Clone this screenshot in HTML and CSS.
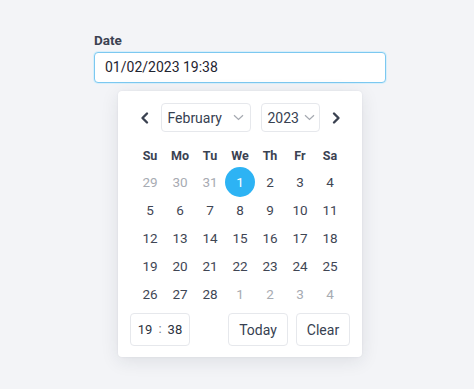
FILE: index.html
```html
<!DOCTYPE html>
<html>
<head>
<meta charset="utf-8">
<link rel="stylesheet" href="styles.css">
</head>
<body>
<div class="page">
  <label class="label">Date</label>
  <div class="input">01/02/2023 19:38</div>
  <div class="popup">
    <div class="header">
      <span class="nav"><svg width="16" height="16" viewBox="0 0 16 16"><polyline points="10,3.5 5.5,8 10,12.5" fill="none" stroke="#3a4150" stroke-width="2.4" stroke-linecap="round" stroke-linejoin="round"/></svg></span>
      <div class="select month">February<svg class="chev" width="11" height="7" viewBox="0 0 11 7"><polyline points="1,1.2 5.5,5.5 10,1.2" fill="none" stroke="#a5a9b0" stroke-width="1.2"/></svg></div>
      <div class="select year">2023<svg class="chev" width="11" height="7" viewBox="0 0 11 7"><polyline points="1,1.2 5.5,5.5 10,1.2" fill="none" stroke="#a5a9b0" stroke-width="1.2"/></svg></div>
      <span class="nav"><svg width="16" height="16" viewBox="0 0 16 16"><polyline points="6,3.5 10.5,8 6,12.5" fill="none" stroke="#3a4150" stroke-width="2.4" stroke-linecap="round" stroke-linejoin="round"/></svg></span>
    </div>
    <div class="grid">
      <div class="wd">Su</div><div class="wd">Mo</div><div class="wd">Tu</div><div class="wd">We</div><div class="wd">Th</div><div class="wd">Fr</div><div class="wd">Sa</div>
      <div class="day muted">29</div><div class="day muted">30</div><div class="day muted">31</div><div class="day"><span class="sel">1</span></div><div class="day">2</div><div class="day">3</div><div class="day">4</div>
      <div class="day">5</div><div class="day">6</div><div class="day">7</div><div class="day">8</div><div class="day">9</div><div class="day">10</div><div class="day">11</div>
      <div class="day">12</div><div class="day">13</div><div class="day">14</div><div class="day">15</div><div class="day">16</div><div class="day">17</div><div class="day">18</div>
      <div class="day">19</div><div class="day">20</div><div class="day">21</div><div class="day">22</div><div class="day">23</div><div class="day">24</div><div class="day">25</div>
      <div class="day">26</div><div class="day">27</div><div class="day">28</div><div class="day muted">1</div><div class="day muted">2</div><div class="day muted">3</div><div class="day muted">4</div>
    </div>
    <div class="footer">
      <div class="time"><span>19</span><span class="colon">:</span><span>38</span></div>
      <div class="spacer"></div>
      <div class="btn today">Today</div>
      <div class="btn clear">Clear</div>
    </div>
  </div>
</div>
</body>
</html>
```
FILE: styles.css
```css
html, body {
  margin: 0;
  padding: 0;
}
body {
  background: #f3f4f7;
  font-family: Roboto, "Liberation Sans", sans-serif;
  color: #374151;
  width: 474px;
  height: 389px;
  overflow: hidden;
}
.page {
  padding: 32px 0 0 94px;
}
.label {
  display: block;
  font-size: 13.5px;
  font-weight: 700;
  color: #3b4252;
  line-height: 16px;
  height: 20px;
}
.input {
  box-sizing: border-box;
  width: 292px;
  height: 31px;
  border: 1.5px solid #7cc8f0;
  border-radius: 4px;
  background: #fff;
  box-shadow: 0 0 0 1px #d8effb;
  font-size: 14px;
  line-height: 28px;
  padding-left: 10px;
  color: #1f2430;
}
.popup {
  box-sizing: border-box;
  margin: 8px 0 0 24px;
  width: 244px;
  height: 266px;
  background: #fff;
  border-radius: 4px;
  box-shadow: 0 4px 18px rgba(30, 40, 60, 0.10), 0 0 2px rgba(30, 40, 60, 0.08);
  padding: 12px 0 0;
}
.header {
  display: flex;
  align-items: center;
  justify-content: center;
  height: 29px;
}
.nav {
  display: flex;
  width: 16px;
  height: 16px;
}
.nav:first-child { margin-right: 8px; }
.nav:last-child { margin-left: 8px; }
.select {
  box-sizing: border-box;
  height: 29px;
  border: 1px solid #e6e8ec;
  border-radius: 4px;
  display: flex;
  align-items: center;
  justify-content: space-between;
  font-size: 14px;
  color: #374151;
  padding: 0 6px 0 6px;
}
.month { width: 90px; margin-right: 10px; }
.year { width: 59px; padding-right: 4px; }
.chev { display: block; }
.grid {
  display: grid;
  grid-template-columns: repeat(7, 30px);
  grid-template-rows: 26px repeat(5, 28px);
  margin: 10px 0 0 17px;
}
.wd {
  display: flex;
  align-items: center;
  justify-content: center;
  font-size: 12.5px;
  font-weight: 700;
  color: #3b4252;
}
.day {
  display: flex;
  align-items: center;
  justify-content: center;
  font-size: 13.5px;
  color: #3f4654;
}
.day.muted { color: #a7abb2; }
.sel {
  flex: none;
  width: 30px;
  height: 30px;
  border-radius: 50%;
  background: #2db3f4;
  color: #fff;
  display: flex;
  align-items: center;
  justify-content: center;
}
.footer {
  display: flex;
  align-items: center;
  margin-top: 5px;
  padding: 0 12px;
}
.time, .btn {
  box-sizing: border-box;
  height: 33px;
  border: 1px solid #e6e8ec;
  border-radius: 4px;
  display: flex;
  align-items: center;
  justify-content: center;
  color: #374151;
}
.time {
  width: 60px;
  font-size: 13px;
  gap: 6px;
  color: #2c3240;
}
.colon { position: relative; top: -1px; color: #7a808b; }
.spacer { flex: 1; }
.btn { font-size: 14px; }
.today { width: 60px; margin-right: 8px; }
.clear { width: 54px; }
```
